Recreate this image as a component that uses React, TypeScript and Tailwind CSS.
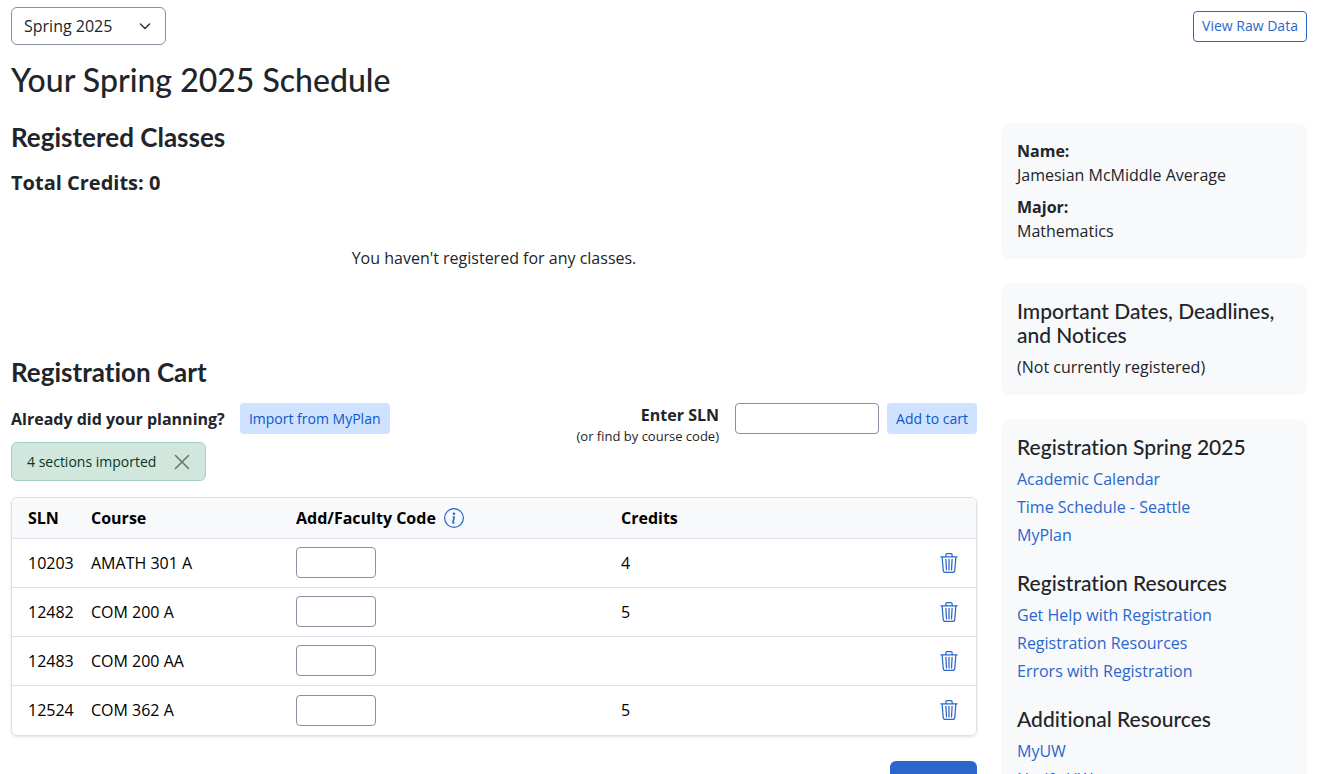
import { useState } from 'react'
import { BsInfoCircle, BsTrash3 } from 'react-icons/bs'

const initialCart = [
  { sln: '10203', course: 'AMATH 301 A', credits: '4' },
  { sln: '12482', course: 'COM 200 A', credits: '5' },
  { sln: '12483', course: 'COM 200 AA', credits: '' },
  { sln: '12524', course: 'COM 362 A', credits: '5' },
]

const linkGroups = [
  {
    title: 'Registration Spring 2025',
    links: ['Academic Calendar', 'Time Schedule - Seattle', 'MyPlan'],
  },
  {
    title: 'Registration Resources',
    links: ['Get Help with Registration', 'Registration Resources', 'Errors with Registration'],
  },
  {
    title: 'Additional Resources',
    links: ['MyUW', 'Notify.UW'],
  },
]

const headingFont = "font-['Lato',sans-serif] [font-variant-ligatures:none]"
const inputClass = 'h-[31px] rounded border border-[#8a8fa0] bg-white px-2 text-sm'
const lightButton = 'h-[31px] rounded bg-[#cfe2ff] text-sm text-[#0a58ca] hover:bg-[#bcd6ff]'

function SectionHeading({ children }: { children: React.ReactNode }) {
  return <h2 className={`${headingFont} text-[26px] leading-7 font-bold`}>{children}</h2>
}

function SideHeading({ children }: { children: React.ReactNode }) {
  return <h2 className={`${headingFont} mb-2 text-[21px] leading-6 font-medium`}>{children}</h2>
}

export default function App() {
  const [cart, setCart] = useState(initialCart)
  const [showAlert, setShowAlert] = useState(true)

  return (
    <div className="bg-white pt-[7px] pr-[31px] pb-6 pl-[11px] font-['Open_Sans',sans-serif] text-base text-[#212529]">
      {/* Term picker */}
      <header className="flex items-center justify-between">
        <div className="relative">
          <select
            aria-label="Term"
            className="h-[38px] w-[155px] appearance-none rounded-md border border-[#8a8fa0] bg-white pr-9 pl-3"
          >
            <option>Spring 2025</option>
          </select>
          <svg
            className="pointer-events-none absolute top-3 right-3 size-4"
            viewBox="0 0 16 16"
            fill="none"
            stroke="#343a40"
            strokeWidth="1.6"
            strokeLinecap="round"
            strokeLinejoin="round"
          >
            <path d="m2.5 5 4.5 4.5L11.5 5" />
          </svg>
        </div>
        <button
          type="button"
          className="h-[31px] w-[114px] rounded border border-[#2b67cb] text-sm text-[#2b67cb]"
        >
          View Raw Data
        </button>
      </header>

      <h1 className={`${headingFont} mt-4 text-[32px] leading-[38px] font-medium`}>Your Spring 2025 Schedule</h1>

      <div className="mt-6 grid grid-cols-12 items-start gap-6">
        <main className="col-span-9">
          <SectionHeading>Registered Classes</SectionHeading>
          <h3 className="mt-5 text-xl leading-6 font-bold">Total Credits: 0</h3>
          <p className="py-[51px] text-center">You haven't registered for any classes.</p>

          <div className="mt-[37px] mb-[17px]">
            <SectionHeading>Registration Cart</SectionHeading>
          </div>

          <div className="flex items-start justify-between">
            <div>
              <div className="flex items-center gap-[15px]">
                <span className="font-bold">Already did your planning?</span>
                <button type="button" className={`${lightButton} w-[150px]`}>
                  Import from MyPlan
                </button>
              </div>
              {showAlert && (
                <div
                  role="alert"
                  className="mt-2 flex h-[39px] w-[195px] items-center justify-between rounded-md border border-[#a3cfbb] bg-[#d1e7dd] px-[15px] text-sm text-[#0a3622]"
                >
                  4 sections imported
                  <button type="button" aria-label="Close" onClick={() => setShowAlert(false)}>
                    <svg
                      className="size-4 text-black opacity-50"
                      viewBox="0 0 16 16"
                      stroke="currentColor"
                      strokeWidth="1.5"
                      strokeLinecap="round"
                    >
                      <path d="m1.5 1.5 13 13m0-13-13 13" />
                    </svg>
                  </button>
                </div>
              )}
            </div>

            <div className="flex items-start">
              <div className="mr-4 text-right">
                <label htmlFor="sln" className="block font-bold">
                  Enter SLN
                </label>
                <span className="block text-[13px] leading-[18px]">(or find by course code)</span>
              </div>
              <input id="sln" type="text" className={`${inputClass} mr-2 w-36`} />
              <button type="button" className={`${lightButton} w-[90px]`}>
                Add to cart
              </button>
            </div>
          </div>

          {/* Cart */}
          <div className="mt-4 overflow-hidden rounded-md border border-[#dee2e6] shadow-sm">
            <table className="w-full text-left text-black">
              <thead className="bg-[#f8f9fb]">
                <tr className="h-10 border-b border-[#dee2e6]">
                  <th className="w-[71px] pl-4">SLN</th>
                  <th className="w-[205px] pl-2">Course</th>
                  <th className="w-[325px] pl-2">
                    <span className="flex items-center gap-2">
                      Add/Faculty Code
                      <button type="button" aria-label="About add codes" className="text-[#2b67cb]">
                        <BsInfoCircle className="size-5" />
                      </button>
                    </span>
                  </th>
                  <th className="pl-2">Credits</th>
                  <th aria-label="Remove" />
                </tr>
              </thead>
              <tbody>
                {cart.map((row) => (
                  <tr key={row.sln} className="h-[49px] border-b border-[#dee2e6] last:h-[50px] last:border-b-0">
                    <td className="pl-4">{row.sln}</td>
                    <td className="pl-2">{row.course}</td>
                    <td className="pl-2">
                      <input
                        type="text"
                        aria-label={`Add code for ${row.course}`}
                        className={`${inputClass} block w-20`}
                      />
                    </td>
                    <td className="pl-2">{row.credits}</td>
                    <td className="pr-[17px]">
                      <button
                        type="button"
                        aria-label={`Remove ${row.course}`}
                        onClick={() => setCart(cart.filter((r) => r.sln !== row.sln))}
                        className="ml-auto block text-[#2b67cb]"
                      >
                        <BsTrash3 className="size-5" />
                      </button>
                    </td>
                  </tr>
                ))}
              </tbody>
            </table>
          </div>

          <div className="mt-[25px] flex justify-end">
            <button type="button" className="h-[38px] w-[87px] rounded-md bg-[#2b67cb] text-white">
              Register
            </button>
          </div>
        </main>

        <aside className="col-span-3 flex flex-col gap-6">
          <dl className="rounded-lg bg-[#f8f9fb] p-4">
            <dt className="font-bold">Name:</dt>
            <dd className="mb-2">Jamesian McMiddle Average</dd>
            <dt className="font-bold">Major:</dt>
            <dd>Mathematics</dd>
          </dl>

          <section className="rounded-lg bg-[#f8f9fb] p-4">
            <SideHeading>Important Dates, Deadlines, and Notices</SideHeading>
            <p>(Not currently registered)</p>
          </section>

          <section className="flex flex-col gap-6 rounded-lg bg-[#f8f9fb] p-4">
            {linkGroups.map((group) => (
              <div key={group.title}>
                <SideHeading>{group.title}</SideHeading>
                <ul className="flex flex-col gap-1">
                  {group.links.map((link) => (
                    <li key={link}>
                      <a href="#" className="text-[#2b67cb] hover:underline">
                        {link}
                      </a>
                    </li>
                  ))}
                </ul>
              </div>
            ))}
          </section>
        </aside>
      </div>
    </div>
  )
}
